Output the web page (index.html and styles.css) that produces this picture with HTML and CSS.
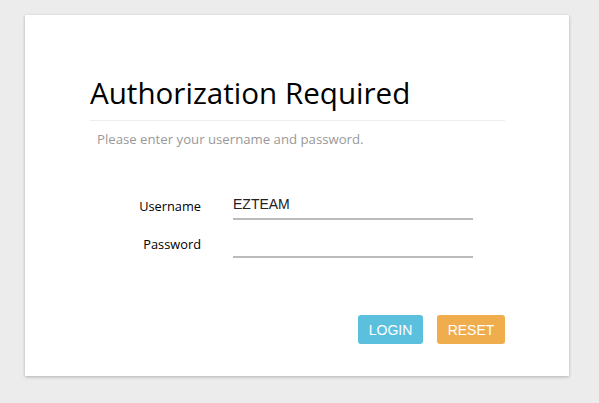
FILE: index.html
```html
<!DOCTYPE html>
<html>
<head>
<meta charset="utf-8">
<link rel="stylesheet" href="styles.css">
</head>
<body>
<div class="card">
  <h2 class="title">Authorization Required</h2>
  <div class="subtitle">Please enter your username and password.</div>
  <div class="form">
    <div class="row">
      <label class="label">Username</label>
      <div class="field">EZTEAM</div>
    </div>
    <div class="row">
      <label class="label">Password</label>
      <div class="field"></div>
    </div>
  </div>
  <div class="actions">
    <button class="btn login">LOGIN</button>
    <button class="btn reset">RESET</button>
  </div>
</div>
</body>
</html>
```

FILE: styles.css
```css
html, body { margin: 0; padding: 0; }
body {
  background: #ececec;
  padding: 15px 0 0 25px;
  height: 403px;
  box-sizing: border-box;
}
.card {
  width: 544px;
  height: 361px;
  background: #fff;
  box-shadow: 0 1px 3px rgba(0,0,0,0.25);
  box-sizing: border-box;
  padding: 58px 64px 0 64px;
  font-family: "Open Sans", "Noto Sans", sans-serif;
}
.title {
  margin: 0 0 0 1px;
  font-weight: 400;
  font-size: 29.6px;
  line-height: 40px;
  color: #000;
  padding-bottom: 7px;
  border-bottom: 1px solid #eee;
}
.subtitle {
  margin: 8px 0 0 8px;
  font-size: 13.2px;
  color: #999;
  line-height: 20px;
}
.form {
  margin-top: 45px;
  display: flex;
  flex-direction: column;
  gap: 12px;
}
.row {
  display: flex;
  align-items: flex-end;
}
.label {
  width: 112px;
  text-align: right;
  font-size: 12.8px;
  color: #000;
  line-height: 20px;
  padding-bottom: 4px;
}
.field {
  margin-left: 32px;
  width: 240px;
  height: 20px;
  border-bottom: 2px solid #bbb;
  font-family: "Liberation Sans", Arial, sans-serif;
  font-size: 14px;
  color: #222;
  line-height: 20px;
  padding-bottom: 4px;
}
.actions {
  margin-top: 57px;
  display: flex;
  justify-content: flex-end;
  gap: 14px;
}
.btn {
  border: 0;
  border-radius: 3px;
  height: 29px;
  color: #fff;
  font-family: "Liberation Sans", Arial, sans-serif;
  font-size: 14px;
  padding: 0;
}
.login { width: 65px; background: #5bc0de; }
.reset { width: 68px; background: #f0ad4e; }
```
